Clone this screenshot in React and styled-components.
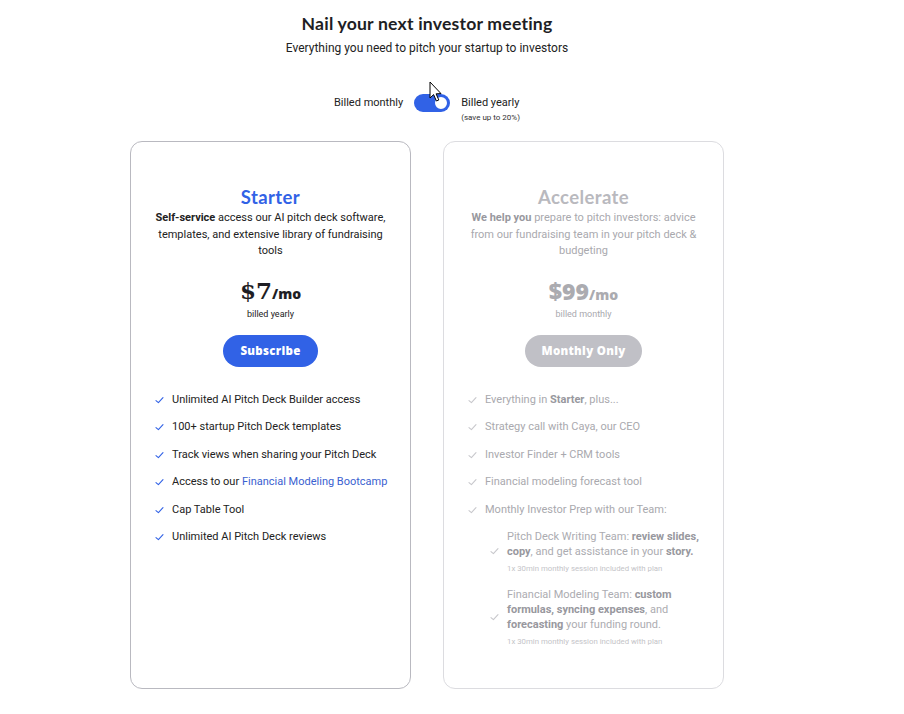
import React from 'react';
import styled, { createGlobalStyle } from 'styled-components';

const GlobalStyle = createGlobalStyle`
  body {
    margin: 0;
    background: #fff;
    font-family: Roboto, "Liberation Sans", sans-serif;
    color: #222;
  }
`;

const Page = styled.div`
  position: relative;
  width: 854px;
  height: 714px;
  display: flex;
  flex-direction: column;
  align-items: center;
  padding-top: 12px;
  box-sizing: border-box;
`;

const Title = styled.h1`
  margin: 0;
  font-family: Lato, "Open Sans", sans-serif;
  font-weight: 700;
  font-size: 17.6px;
  line-height: 24px;
  letter-spacing: 0.2px;
  color: #1e1e24;
`;

const Subtitle = styled.p`
  margin: 4px 0 0;
  font-size: 12px;
  line-height: 16px;
  color: #222;
`;

const BillingRow = styled.div`
  display: flex;
  align-items: flex-start;
  gap: 11px;
  margin-top: 38px;
  font-size: 11px;
`;

const BillingLabel = styled.div`
  line-height: 14px;
  padding-top: 2px;
  display: flex;
  flex-direction: column;
  align-items: flex-start;
`;

const SaveNote = styled.span`
  font-size: 8px;
  line-height: 10px;
  margin-top: 3px;
  color: #333;
`;

const Toggle = styled.div`
  width: 36px;
  height: 18px;
  border-radius: 9px;
  background: #3162e6;
  display: flex;
  align-items: center;
  justify-content: flex-end;
  padding: 0 1px;
  box-sizing: border-box;
`;

const Knob = styled.div`
  width: 16px;
  height: 16px;
  border-radius: 50%;
  background: #fff;
  border: 2px solid #3162e6;
  box-sizing: border-box;
`;

const Cards = styled.div`
  display: flex;
  gap: 32px;
  margin-top: 18px;
`;

const Card = styled.div`
  width: 281px;
  height: 548px;
  box-sizing: border-box;
  border: 1px solid ${p => (p.$muted ? '#dcdce0' : '#b9b9c0')};
  border-radius: 12px;
  padding: 44px 0 0;
  display: flex;
  flex-direction: column;
  align-items: center;
  color: ${p => (p.$muted ? '#a9a9ae' : '#222')};
`;

const PlanName = styled.h2`
  margin: 0 0 2px;
  font-family: Lato, "Open Sans", sans-serif;
  font-weight: 700;
  font-size: 18.5px;
  line-height: 22px;
  letter-spacing: 0.4px;
  color: ${p => (p.$muted ? '#b9b9be' : '#3162e6')};
`;

const Description = styled.p`
  margin: 0;
  width: 232px;
  text-align: center;
  font-size: 11px;
  line-height: 16.5px;
`;

const Strong = styled.b`
  font-weight: 700;
  color: ${p => (p.$muted ? '#98989e' : 'inherit')};
`;

const Price = styled.div`
  margin-top: 18px;
  display: flex;
  align-items: baseline;
  font-family: "Open Sans", sans-serif;
  font-weight: 800;
  color: ${p => (p.$muted ? '#ababb0' : '#1e1e24')};
`;

const Amount = styled.span`
  font-size: 23px;
  line-height: 26px;
  font-family: ${p => (p.$serif ? '"DejaVu Serif", serif' : '"Open Sans", sans-serif')};
`;

const Per = styled.span`
  font-size: 14px;
`;

const BilledNote = styled.div`
  margin-top: 4px;
  font-size: 9px;
  line-height: 12px;
`;

const CtaButton = styled.div`
  margin-top: 15px;
  height: 32px;
  border-radius: 16px;
  padding: 0 ${p => (p.$muted ? '16px' : '17px')};
  display: flex;
  align-items: center;
  justify-content: center;
  background: ${p => (p.$muted ? '#c0c0c6' : '#3162e6')};
  color: #fff;
  font-family: "Open Sans", sans-serif;
  font-weight: 800;
  font-size: 11.5px;
  letter-spacing: 0.3px;
`;

const FeatureList = styled.ul`
  list-style: none;
  margin: 26px 0 0;
  padding: 0 22px;
  align-self: stretch;
  display: flex;
  flex-direction: column;
  gap: 13.5px;
`;

const Feature = styled.li`
  display: flex;
  align-items: center;
  gap: 8px;
  font-size: 11px;
  line-height: 14px;
`;

const SubList = styled.ul`
  list-style: none;
  margin: 12px 0 0;
  padding: 0 14px 0 44px;
  align-self: stretch;
  display: flex;
  flex-direction: column;
  gap: 13px;
`;

const SubFeature = styled.li`
  display: flex;
  align-items: center;
  gap: 8px;
`;

const SubBody = styled.div`
  display: flex;
  flex-direction: column;
`;

const SubText = styled.p`
  margin: 0;
  font-size: 11px;
  line-height: 15px;
  color: #acacb1;
`;

const SubNote = styled.span`
  font-size: 7.8px;
  line-height: 10px;
  margin-top: 5px;
  color: #c4c4c8;
`;

const Link = styled.span`
  color: #3a5fd0;
`;

const Cursor = styled.svg`
  position: absolute;
  left: 429px;
  top: 81px;
`;

const Check = ({ muted }) => (
  <svg width="9" height="8" viewBox="0 0 9 8" style={{ flexShrink: 0, marginLeft: 2 }}>
    <path d="M1 4.6 L3.4 6.6 L8 1.6" fill="none" stroke={muted ? '#c8c8cc' : '#3162e6'} strokeWidth="1.1" strokeLinecap="round" strokeLinejoin="round" />
  </svg>
);

const starterFeatures = [
  'Unlimited AI Pitch Deck Builder access',
  '100+ startup Pitch Deck templates',
  'Track views when sharing your Pitch Deck',
  <>Access to our <Link>Financial Modeling Bootcamp</Link></>,
  'Cap Table Tool',
  'Unlimited AI Pitch Deck reviews',
];

const accelerateFeatures = [
  <>Everything in <Strong $muted>Starter</Strong>, plus...</>,
  'Strategy call with Caya, our CEO',
  'Investor Finder + CRM tools',
  'Financial modeling forecast tool',
  'Monthly Investor Prep with our Team:',
];

const sessions = [
  <>Pitch Deck Writing Team: <Strong $muted>review slides, copy</Strong>, and get assistance in your <Strong $muted>story.</Strong></>,
  <>Financial Modeling Team: <Strong $muted>custom formulas, syncing expenses</Strong>, and <Strong $muted>forecasting</Strong> your funding round.</>,
];

export default function App() {
  return (
    <>
      <GlobalStyle />
      <Page>
        <Title>Nail your next investor meeting</Title>
        <Subtitle>Everything you need to pitch your startup to investors</Subtitle>

        <BillingRow>
          <BillingLabel>Billed monthly</BillingLabel>
          <Toggle><Knob /></Toggle>
          <BillingLabel>
            Billed yearly
            <SaveNote>(save up to 20%)</SaveNote>
          </BillingLabel>
        </BillingRow>

        <Cards>
          <Card>
            <PlanName>Starter</PlanName>
            <Description>
              <Strong>Self-service</Strong> access our AI pitch deck software, templates, and extensive library of fundraising tools
            </Description>
            <Price>
              <Amount $serif>$7</Amount>
              <Per>/mo</Per>
            </Price>
            <BilledNote>billed yearly</BilledNote>
            <CtaButton>Subscribe</CtaButton>
            <FeatureList>
              {starterFeatures.map((f, i) => (
                <Feature key={i}>
                  <Check />
                  <span>{f}</span>
                </Feature>
              ))}
            </FeatureList>
          </Card>

          <Card $muted>
            <PlanName $muted>Accelerate</PlanName>
            <Description>
              <Strong $muted>We help you</Strong> prepare to pitch investors: advice from our fundraising team in your pitch deck &amp; budgeting
            </Description>
            <Price $muted>
              <Amount>$99</Amount>
              <Per>/mo</Per>
            </Price>
            <BilledNote>billed monthly</BilledNote>
            <CtaButton $muted>Monthly Only</CtaButton>
            <FeatureList>
              {accelerateFeatures.map((f, i) => (
                <Feature key={i}>
                  <Check muted />
                  <span>{f}</span>
                </Feature>
              ))}
            </FeatureList>
            <SubList>
              {sessions.map((s, i) => (
                <SubFeature key={i}>
                  <Check muted />
                  <SubBody>
                    <SubText>{s}</SubText>
                    <SubNote>1x 30min monthly session included with plan</SubNote>
                  </SubBody>
                </SubFeature>
              ))}
            </SubList>
          </Card>
        </Cards>

        <Cursor width="14" height="22" viewBox="0 0 14 22">
          <path d="M1 1 L1 17 L4.6 13.6 L7.4 20 L9.8 19 L7.1 12.8 L12 12.6 Z" fill="#fff" stroke="#000" strokeWidth="1" strokeLinejoin="round" />
        </Cursor>
      </Page>
    </>
  );
}
